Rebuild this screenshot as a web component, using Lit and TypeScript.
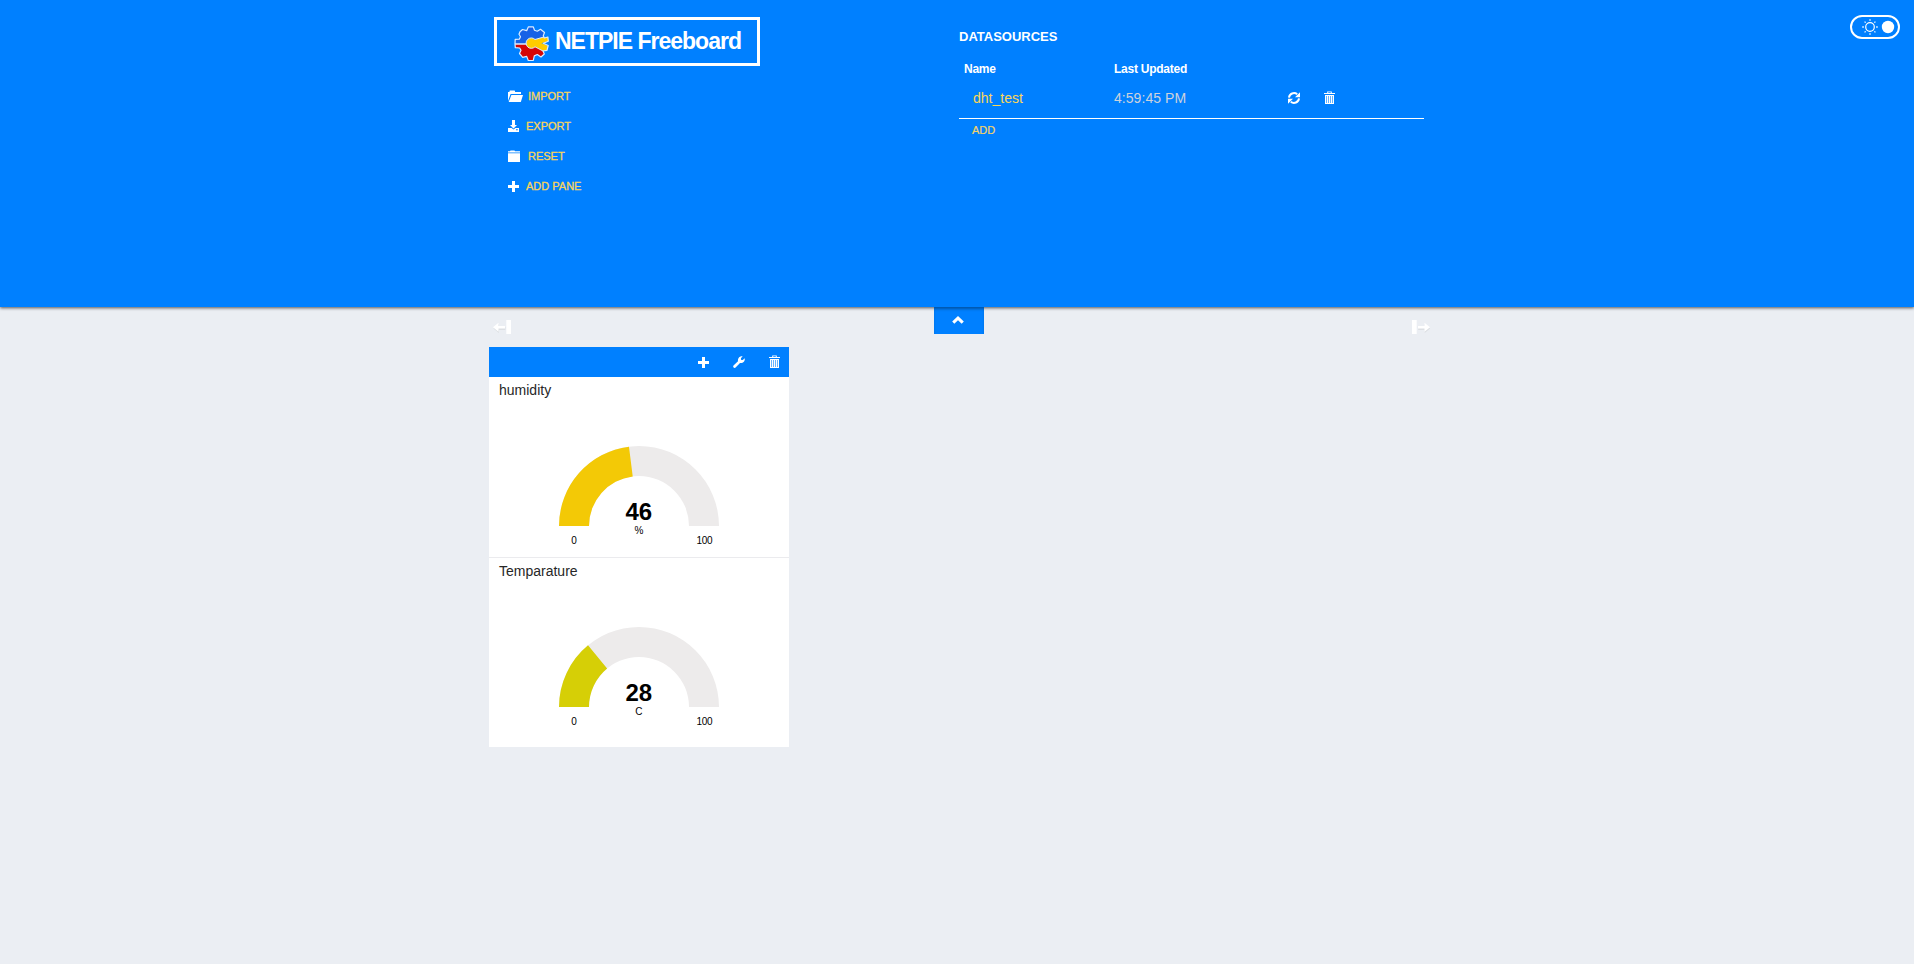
import { LitElement, html, svg, css } from "lit";
import { customElement, property } from "lit/decorators.js";

const shapes: Record<string, { w: number; h: number; body: unknown }> = {
  folderOpen: {
    w: 15, h: 12,
    body: svg`<path d="M0 11V2h1.5V1L2 .6h4.5L7 1v1h6v2H2.6z"/><path d="M3.4 4.9H15L12.8 12H.7z"/>`,
  },
  download: {
    w: 11, h: 12,
    body: svg`<path d="M4 0h3v5h2L5.5 8.4 2 5h2z"/><path fill-rule="evenodd" d="M0 8.1h3.6L5.5 9.6 7.4 8.1H11V12H0zM8 9.2v1h1.8v-1z"/>`,
  },
  folderClosed: {
    w: 12, h: 12,
    body: svg`<path d="M0 2.5V1.2h2L2.5.5h4L7 1.2h5v1.300zM0 3.300h12V12H0z"/>`,
  },
  plus: { w: 11, h: 11, body: svg`<path d="M4 0h3v4h4v3H7v4H4V7H0V4h4z"/>` },
  refresh: {
    w: 12, h: 12,
    body: svg`<path d="M1 5.6A5 5 0 0 1 9.2 2.3" fill="none" stroke="#fff" stroke-width="2"/><path d="M12 .2v5H7z"/><path d="M11 6.4a5 5 0 0 1-8.2 3.3" fill="none" stroke="#fff" stroke-width="2"/><path d="M0 11.8v-5h5z"/>`,
  },
  trash: {
    w: 11, h: 13,
    body: svg`<path fill-rule="evenodd" d="M3.2 2V.4h4.6V2H11v1H0V2zM4.2 2h2.6v-.7H4.2z"/><path fill-rule="evenodd" d="M1 4h9v9H1zM2 5v7h1V5zM4 5v7h1V5zM6 5v7h1V5zM8 5v7h1V5z"/><path d="M2 5h7v7H2z" opacity=".4"/>`,
  },
  wrench: {
    w: 12, h: 12,
    body: svg`<path d="M.5 9.500 5 5.200C4.600 2.200 6.600-.2 9.700.3L7.900 2.300l.3 1.600 1.600.2 1.900-1.800C12.300 5.200 10 7.400 7 7L2.600 11.500C1.300 12.700-.7 10.800.5 9.500z"/>`,
  },
  chevronUp: {
    w: 12, h: 8,
    body: svg`<path d="M6 0l5.800 5.600L9.700 7.800 6 4.200 2.300 7.800.2 5.600z"/>`,
  },
  columnLeft: {
    w: 18, h: 14,
    body: svg`<path d="M5.500 3.200v3H12v3H5.500v3L0 7.700z" fill="#dcdfe3" transform="translate(.4 .9)"/><path d="M5.500 2.800v3.100H12v2.700H5.500v3.100L0 7.300zM13.300 0H18v14h-4.700z"/>`,
  },
  columnRight: {
    w: 18, h: 14,
    body: svg`<path d="M12.500 3.200v3H6v3h6.500v3L18 7.700z" fill="#dcdfe3" transform="translate(.2 .9)"/><path d="M12.500 2.800v3.100H6v2.700h6.500v3.100L18 7.300zM0 0h4.700v14H0z"/>`,
  },
};

@customElement("fb-icon")
class FbIcon extends LitElement {
  @property() name = "plus";
  static styles = css`
    :host { display: block; flex: none; }
    svg { display: block; fill: #fff; overflow: visible; }
  `;
  render() {
    const s = shapes[this.name];
    return html`<svg width=${s.w} height=${s.h} viewBox="0 0 ${s.w} ${s.h}">${s.body}</svg>`;
  }
}

@customElement("fb-gauge")
class FbGauge extends LitElement {
  @property() label = "";
  @property() units = "";
  @property() color = "";
  @property({ type: Number }) value = 0;
  static styles = css`
    :host { display: block; }
    .title { padding: 4px 10px 1px; font-size: 14px; line-height: 18px; color: #272727; }
    svg { display: block; }
    text { text-anchor: middle; fill: #000; font-family: "Liberation Sans", Arial, sans-serif; }
    .value { font-size: 24px; font-weight: bold; }
    .small { font-size: 10px; letter-spacing: -0.3px; }
  `;
  private arc(fraction: number) {
    const a = Math.PI * (1 - fraction);
    const c = Math.cos(a);
    const s = Math.sin(a);
    return `M70 126A80 80 0 0 1 ${150 + 80 * c} ${126 - 80 * s}L${150 + 50 * c} ${126 - 50 * s}A50 50 0 0 0 100 126Z`;
  }
  render() {
    return html`
      <div class="title">${this.label}</div>
      <svg width="300" height="157">
        <path d=${this.arc(1)} fill="#edebeb"></path>
        <path d=${this.arc(this.value / 100)} fill=${this.color}></path>
        <text class="value" x="149.8" y="120.4">${this.value}</text>
        <text class="small" x="149.800" y="134.400">${this.units}</text>
        <text class="small" x="85" y="144.400">0</text>
        <text class="small" x="215.300" y="144.400">100</text>
      </svg>
    `;
  }
}

const gearOutline =
  "M6 5.700L8.500 3.500 12.700 4.700 14.300 .9 19.300 .9 20.500 4.200 23.300 5.200 26.500 3.300 30.500 6.500 29.300 9.700 30.300 12 33.900 11 34.300 15.300 29.300 17.300 34.200 19.500 33 24.300 29 25 30.300 28 27 31 23.300 28.500 20.300 29.900 19.300 34.300 14.300 34.500 12.700 30.400 8.700 31.300 5.500 27.500 7 24.300 5.700 22 1.300 21.600 1 18 1.200 13.300 5.300 13.200 6.500 10.700 5 8.300z";

@customElement("app-root")
class AppRoot extends LitElement {
  static styles = css`
    :host {
      display: block; height: 964px; background: #ebeef3; overflow: hidden;
      font-family: "Liberation Sans", Arial, Helvetica, sans-serif;
    }
    .admin {
      position: relative; box-sizing: border-box; height: 307px; background: #0080ff;
      box-shadow: 0 1px 3px rgba(0, 0, 0, 0.65);
    }
    .inner {
      width: 930px; margin: 0 auto; padding-left: 4px;
      display: grid; grid-template-columns: 465px 465px;
    }
    .brand {
      margin-top: 17px; box-sizing: border-box; width: 266px; height: 49px; border: 3px solid #fff;
      display: flex; align-items: center; padding-left: 17px; gap: 5px; color: #fff;
    }
    .brand svg { display: block; flex: none; margin-top: 5px; }
    .brand-name { font-size: 23px; font-weight: bold; letter-spacing: -1px; line-height: 26px; margin-top: -1px; white-space: nowrap; }
    .menu { margin: 15px 0 0 14px; padding: 0; list-style: none; }
    .menu li { height: 30px; display: flex; align-items: center; gap: 5px; font-size: 11px; color: #f9d55a; }
    .menu .near { gap: 7px; }
    .menu .reset { gap: 8px; }
    .menu .plain fb-icon { margin-top: 1px; }
    .menu span { line-height: 14px; -webkit-text-stroke: 0.3px #f9d55a; }
    .sources { padding-top: 28px; color: #fff; }
    h2 { margin: 0; font-size: 13px; line-height: 17px; font-weight: bold; }
    .row { display: grid; grid-template-columns: 150px 174px 36px 1fr; padding-left: 5px; align-items: center; }
    .head { margin-top: 15px; height: 18px; font-size: 12px; font-weight: bold; letter-spacing: -0.25px; }
    .data { height: 40px; font-size: 14px; border-bottom: 1px solid #fff; }
    .data .name { padding-left: 9px; color: #f9d55a; }
    .data .time { color: #cdd2dc; letter-spacing: 0.05px; }
    .data fb-icon { margin-bottom: 1px; }
    .add { margin: 4px 0 0 13px; font-size: 11px; line-height: 14px; color: #f5d36a; -webkit-text-stroke: 0.2px #f5d36a; }
    .switch { position: absolute; right: 14px; top: 15px; width: 50px; height: 24px; }
    .tab {
      width: 50px; height: 27px; margin: 0 auto; background: #0080ff; display: grid; justify-content: center;
      padding: 9px 2px 0 0; box-sizing: border-box;
      box-shadow: inset 0 3px 3px -1px rgba(0, 0, 0, 0.35); position: relative; left: 2px;
    }
    .board { width: 940px; margin: 0 auto; }
    .columns { display: flex; justify-content: space-between; padding-left: 6px; margin-right: -3px; height: 14px; margin-top: -14px; }
    .pane { width: 300px; height: 400px; margin: 13px 0 0 2px; background: #fff; }
    .tools { height: 30px; background: #0080ff; display: flex; justify-content: flex-end; align-items: center; gap: 24px; padding-right: 9px; box-sizing: border-box; }
    .tools .raised { margin-bottom: 1px; }
    .first { border-bottom: 1px solid #ebebee; }
  `;
  render() {
    return html`
      <header class="admin">
        <div class="inner">
          <div>
            <div class="brand">
              <svg width="36" height="36" viewBox="0 0 36 36">
                <clipPath id="gear"><path d=${gearOutline}></path></clipPath>
                <g clip-path="url(#gear)">
                  <path fill="#1761e6" d="M0 0h36v8L18 18H0z"/>
                  <path fill="#d60505" d="M0 18h18l14 9v9H0z"/>
                  <path fill="none" stroke="#dcecff" stroke-width="1.300" d="M0 18h13"/>
                  <path fill="#fc0" stroke="#dcecff" stroke-width="1" d="M21 13.500L29.800 11 35 9v18l-6-2L21 20.800A5.200 5.200 0 1 1 21 13.500z"/>
                </g>
                <path fill="#0080ff" d="M34.600 14.900L27.500 17.300 34.600 20z"/>
                <path fill="none" stroke="#dcecff" stroke-width="1.200" stroke-linejoin="round" d=${gearOutline}></path>
              </svg>
              <span class="brand-name">NETPIE Freeboard</span>
            </div>
            <ul class="menu">
              <li><fb-icon name="folderOpen"></fb-icon><span>IMPORT</span></li>
              <li class="near"><fb-icon name="download"></fb-icon><span>EXPORT</span></li>
              <li class="reset"><fb-icon name="folderClosed"></fb-icon><span>RESET</span></li>
              <li class="near plain"><fb-icon name="plus"></fb-icon><span>ADD PANE</span></li>
            </ul>
          </div>
          <section class="sources">
            <h2>DATASOURCES</h2>
            <div class="row head"><span>Name</span><span>Last Updated</span></div>
            <div class="row data">
              <span class="name">dht_test</span><span class="time">4:59:45 PM</span>
              <fb-icon name="refresh"></fb-icon><fb-icon name="trash"></fb-icon>
            </div>
            <div class="add">ADD</div>
          </section>
        </div>
        <svg class="switch" viewBox="0 0 50 24">
          <rect x="1" y="1" width="48" height="22" rx="11" fill="none" stroke="#fff" stroke-width="2"/>
          <circle cx="20" cy="12" r="4.300" fill="none" stroke="#fff" stroke-width="1.200"/>
          <path stroke="#fff" stroke-width="1.300" d="M20 4.300v1.500M20 18.200v1.500M12.300 12h1.500M26.200 12h1.500M14.600 6.600l1 1M24.400 16.400l1 1M25.400 6.600l-1 1M15.600 16.400l-1 1"/>
          <circle cx="38" cy="12" r="6.200" fill="#fff"/>
        </svg>
      </header>
      <div class="tab"><fb-icon name="chevronUp"></fb-icon></div>
      <main class="board">
        <div class="columns">
          <fb-icon name="columnLeft"></fb-icon><fb-icon name="columnRight"></fb-icon>
        </div>
        <section class="pane">
          <div class="tools">
            <fb-icon name="plus"></fb-icon><fb-icon name="wrench"></fb-icon><fb-icon class="raised" name="trash"></fb-icon>
          </div>
          <fb-gauge class="first" label="humidity" units="%" color="#f3c906" .value=${46}></fb-gauge>
          <fb-gauge label="Temparature" units="C" color="#d6cf06" .value=${28}></fb-gauge>
        </section>
      </main>
    `;
  }
}
